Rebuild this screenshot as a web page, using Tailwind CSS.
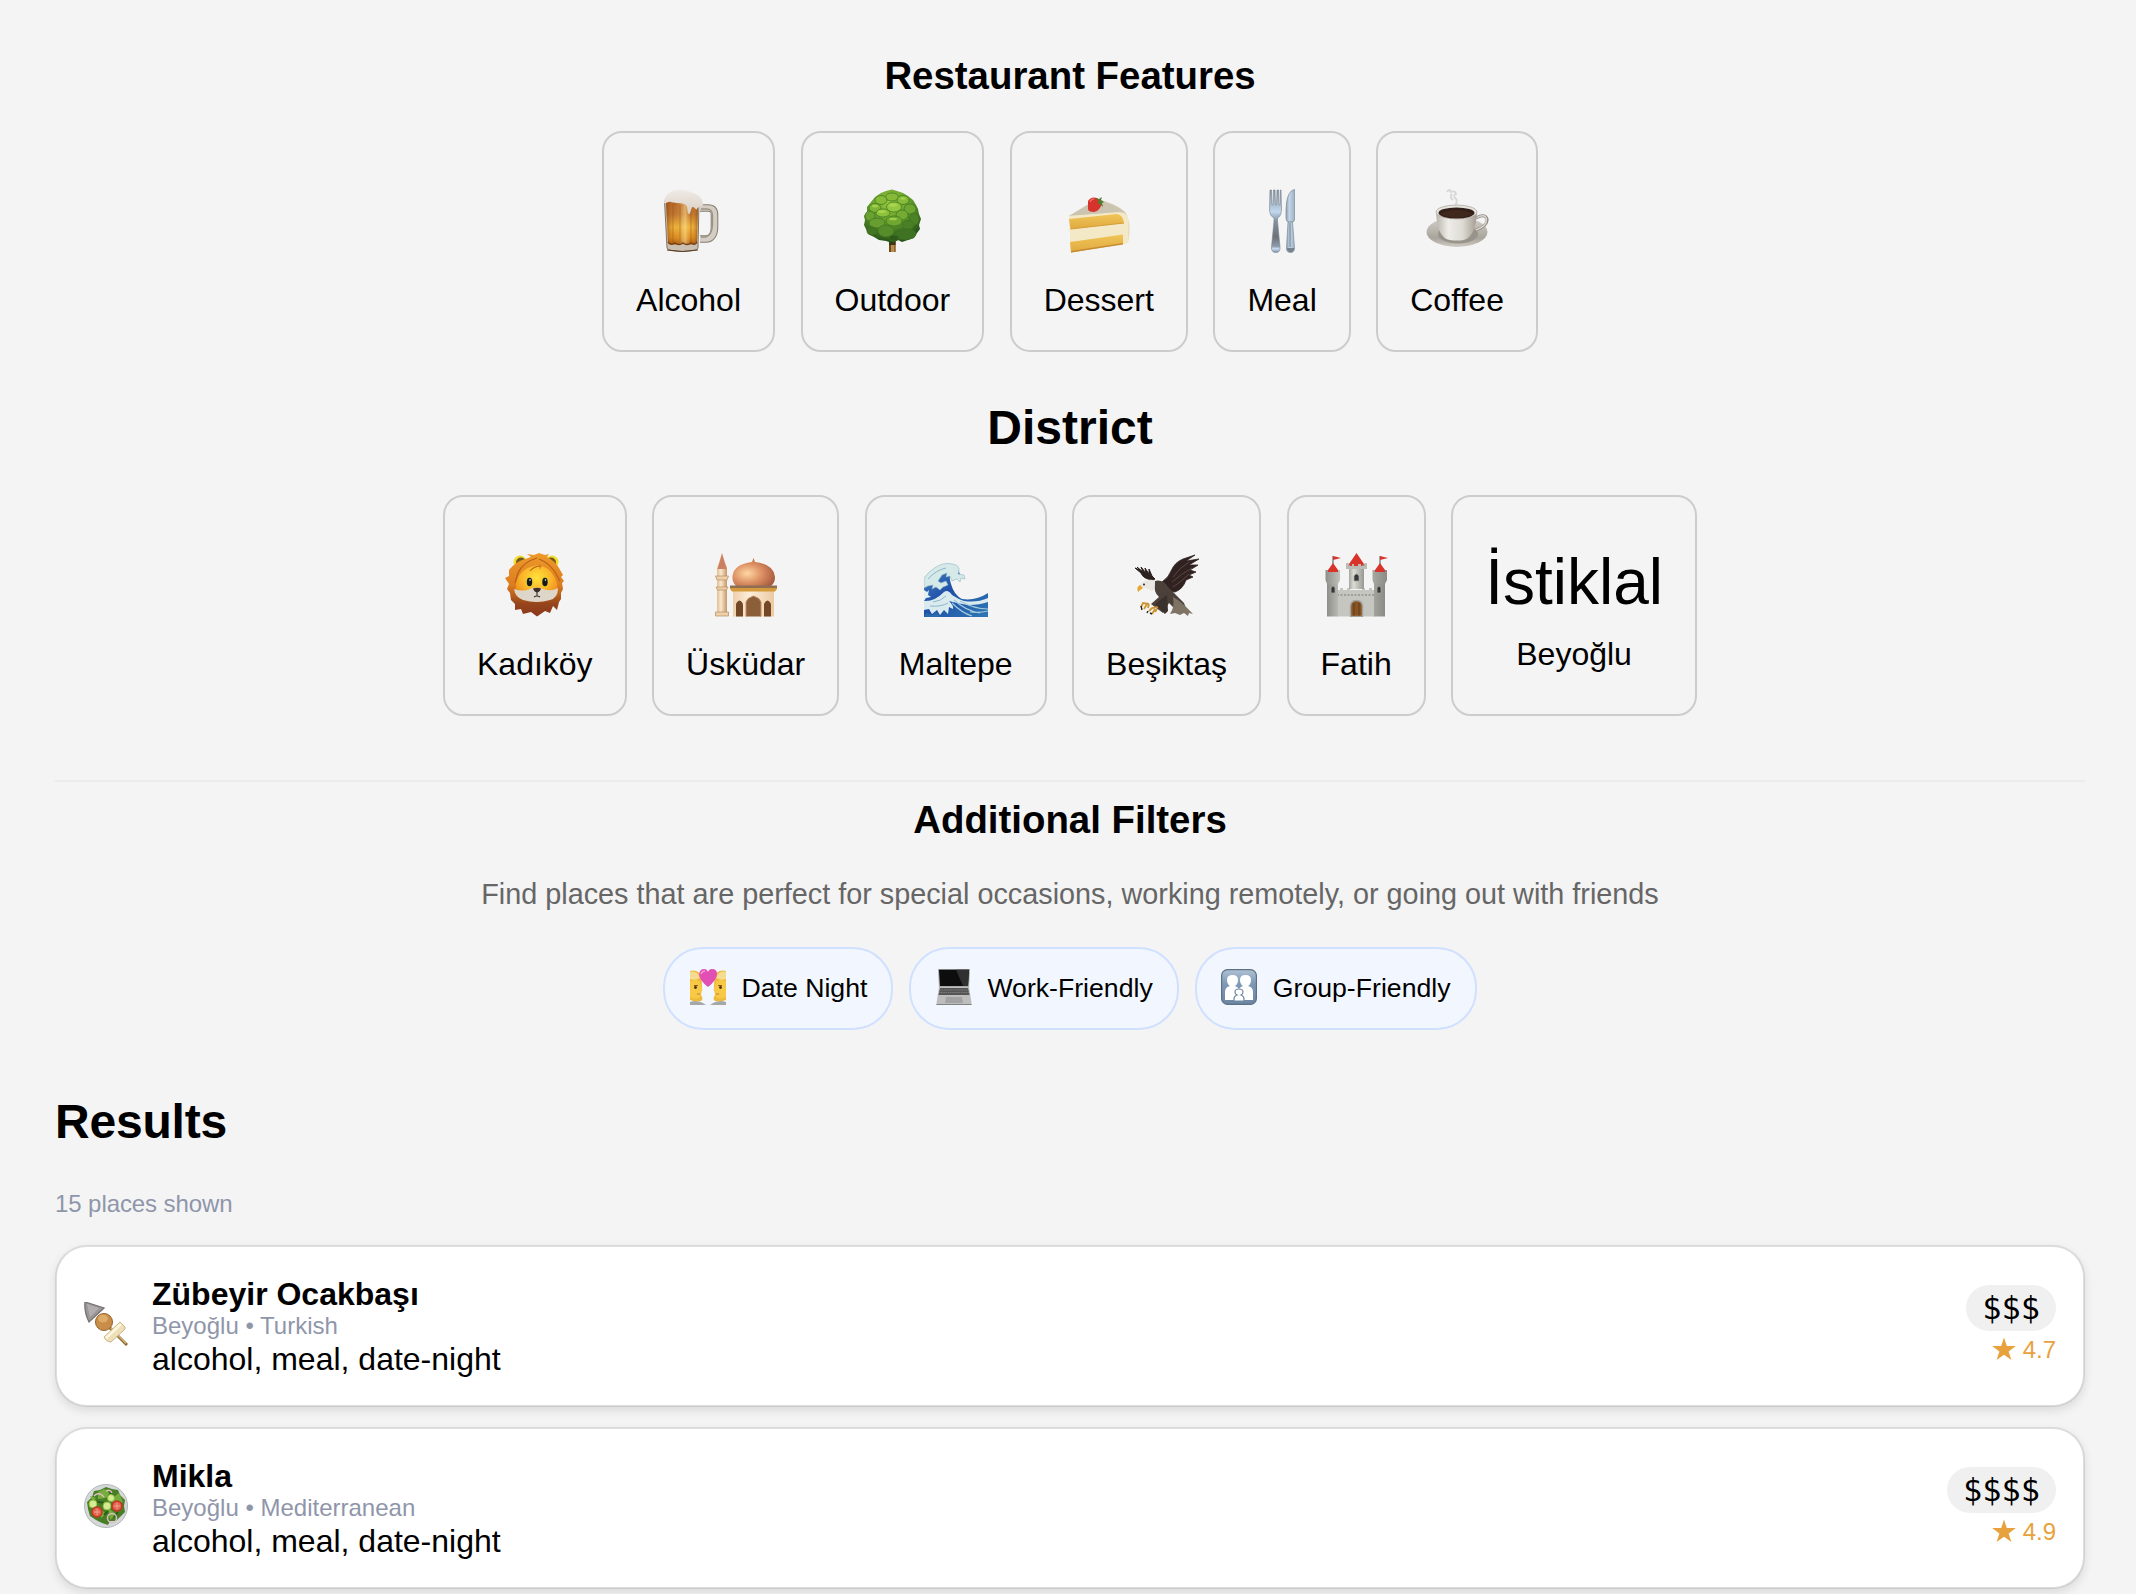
<!DOCTYPE html>
<html lang="en">
<head>
<meta charset="utf-8">
<title>Restaurant Finder</title>
<script src="https://cdn.jsdelivr.net/npm/@tailwindcss/browser@4"></script>
</head>
<body class="bg-[#f4f4f4] text-black font-['Liberation_Sans',Arial,sans-serif] overflow-hidden h-[1594px]">
<main class="pl-[55px] pr-[51px] pt-[54px]">

<!-- Features -->
<section>
<h3 class="text-center font-bold text-[38.4px] leading-[44px]">Restaurant Features</h3>
<div class="mt-[33px] flex justify-center gap-[25.5px]">
  <button class="h-[221px] rounded-[20px] border-2 border-[#ccc] px-8 pt-14 flex flex-col items-center">
    <svg class="size-16 shrink-0" viewBox="0 0 64 64">
      <defs>
        <linearGradient id="beer" x1="0" y1="0" x2="0" y2="1"><stop offset="0" stop-color="#b4652a"/><stop offset=".3" stop-color="#bf7430"/><stop offset=".6" stop-color="#eeb53a"/><stop offset=".85" stop-color="#d98a1e"/><stop offset="1" stop-color="#a8591a"/></linearGradient>
        <linearGradient id="beerx" x1="0" x2="1"><stop offset="0" stop-color="#8a4310" stop-opacity=".7"/><stop offset=".25" stop-color="#c97a22" stop-opacity="0"/><stop offset=".6" stop-color="#ffe9a0" stop-opacity=".55"/><stop offset=".8" stop-color="#e09a30" stop-opacity="0"/><stop offset="1" stop-color="#8a4310" stop-opacity=".7"/></linearGradient>
        <linearGradient id="foam" x1="0" y1="0" x2="0" y2="1"><stop offset="0" stop-color="#efebe6"/><stop offset="1" stop-color="#d9cfc4"/></linearGradient>
      </defs>
      <path d="M43 19H51C56 19 57.500 22 57.500 26V38C57.500 46 54 50 49 50H43" fill="none" stroke="#857a6d" stroke-width="7.600"/>
      <path d="M43 19H51C56 19 57.500 22 57.500 26V38C57.500 46 54 50 49 50H43" fill="none" stroke="#d3cdc4" stroke-width="5.600"/>
      <path d="M44 20H50Q55 20 55.500 26V36Q55 46 49 48H44" fill="none" stroke="#9c9184" stroke-width="1.300"/>
      <path d="M7.500 12L10 59Q10 62 25 62.500Q41 62 41 59L42 12Z" fill="#c9bfb2" stroke="#6d5b48" stroke-width=".8"/>
      <path d="M9 12L11 54Q18 57 25 54Q33 57 40 54L41 12Z" fill="url(#beer)"/>
      <path d="M9 12L11 54Q18 57 25 54Q33 57 40 54L41 12Z" fill="url(#beerx)"/>
      <path d="M16 14V54M23 16V54M34 20V54" stroke="#8f4c14" stroke-opacity=".5" stroke-width=".9"/>
      <path d="M11 53Q14 57 18 54Q22 57 26 54Q30 57 34 54Q38 57 40 53" fill="none" stroke="#7a3f10" stroke-width="1.400"/>
      <path d="M10 61Q25 64 41 61" fill="none" stroke="#5a3a20" stroke-width="1"/>
      <path d="M7 14C7 8 11 2 20 1C28-.500 33 3 37 4C43 7 46 10 46 16C45 19 41 17 40 20C39 22 38 18 36 18C34 17 34 25 32 25C30 25 31 18 29 16C24 13 18 15 14 13C11 12 9 15 7 14Z" fill="url(#foam)"/>
    </svg>
    <span class="mt-[29px] text-[32px] leading-9">Alcohol</span>
  </button>
  <button class="h-[221px] rounded-[20px] border-2 border-[#ccc] px-8 pt-14 flex flex-col items-center">
    <svg class="size-16 shrink-0" viewBox="0 0 64 64">
      <defs><radialGradient id="tree" cx=".45" cy=".25" r=".75"><stop offset="0" stop-color="#9ac83c"/><stop offset=".5" stop-color="#5f9a2c"/><stop offset="1" stop-color="#254f17"/></radialGradient></defs>
      <path d="M29 50H35.500V63H29Z" fill="#b98d4a"/><path d="M29 50H31V63H29ZM34.500 50H35.500V63H34.500Z" fill="#6d4a1e"/><path d="M29 51H35.500V56H29Z" fill="#3c3518"/>
      <path d="M32 .500L37 2L43 4L48 7L53 11L56 16L58 20L59 25L61 30L59 36L60 40L57 44L54 49L48 51L42 53L38 51L32 54L26 52L19 51L14 48L8 45L6 40L4 36L5 31L4 27L7 23L7 18L11 13L15 8L21 4L26 2Z" fill="url(#tree)"/>
      <g fill="#86ba38" stroke="#3f7320" stroke-width=".7">
        <ellipse cx="32" cy="8" rx="6.500" ry="4"/><ellipse cx="21" cy="11" rx="6" ry="4.500"/><ellipse cx="43" cy="11" rx="6" ry="4.500"/><ellipse cx="15" cy="19" rx="6" ry="4.500" fill="#7db435"/><ellipse cx="34" cy="18" rx="7.500" ry="5" fill="#94c740"/><ellipse cx="50" cy="20" rx="6" ry="5" fill="#6fa631"/>
        <ellipse cx="23" cy="24" rx="7" ry="4" fill="#8cc23b"/><ellipse cx="10" cy="27" rx="5" ry="5" fill="#6aa02f"/><ellipse cx="42" cy="26" rx="6" ry="5" fill="#75ab33"/><ellipse cx="54" cy="30" rx="5" ry="6" fill="#4c8226"/>
        <ellipse cx="17" cy="34" rx="8" ry="5" fill="#679e2f"/><ellipse cx="34" cy="32" rx="8" ry="5" fill="#6fa731"/><ellipse cx="48" cy="36" rx="6" ry="4.500" fill="#4a7f26"/>
        <ellipse cx="26" cy="42" rx="8" ry="6" fill="#568c2a"/><ellipse cx="12" cy="42" rx="5" ry="4" fill="#437622"/><ellipse cx="45" cy="45" rx="11" ry="5.500" fill="#3f7222"/><ellipse cx="34" cy="49" rx="5" ry="3" fill="#2e5a1a"/>
      </g>
      <g fill="#b2dc55" opacity=".7"><ellipse cx="33" cy="16" rx="4" ry="1.800"/><ellipse cx="22" cy="22.500" rx="4" ry="1.500"/><ellipse cx="15" cy="17" rx="3" ry="1.500"/><ellipse cx="33" cy="30" rx="4" ry="1.300"/><ellipse cx="43" cy="9.500" rx="3" ry="1.300"/></g>
    </svg>
    <span class="mt-[29px] text-[32px] leading-9">Outdoor</span>
  </button>
  <button class="h-[221px] rounded-[20px] border-2 border-[#ccc] px-8 pt-14 flex flex-col items-center">
    <svg class="size-16 shrink-0" viewBox="0 0 64 64">
      <defs><linearGradient id="sponge" x1="0" y1="0" x2="0" y2="1"><stop offset="0" stop-color="#f0c558"/><stop offset="1" stop-color="#e0a93f"/></linearGradient></defs>
      <path d="M2 27L30 10Q55 16 60 26Q65 37 61 54L4 63.500Z" fill="#e9dfc0"/>
      <path d="M2 27L30 10Q54 17 60 26Q58 23 52 24Z" fill="#cbc4b0"/>
      <path d="M2 27L52 23Q61 23 61 33V54L4 63.500Z" fill="#f4e9c6"/>
      <path d="M2 30L50 25Q56 26 57 34L3.500 40Z" fill="url(#sponge)"/>
      <path d="M3 53L56 45.500V55L4 63.500Z" fill="url(#sponge)"/>
      <path d="M4 62L56 54V55.500L4 63.500Z" fill="#c58b30"/>
      <path d="M3.500 40L57 34" stroke="#d59b36" stroke-width="1"/>
      <path d="M21 12Q24 7 30 9Q36 12 34 17Q32 22 27 23Q21 23 21 20Z" fill="#d8322c"/>
      <path d="M23 13Q24 10 27 10" stroke="#ef6c5c" stroke-width="1.500" fill="none"/>
      <path d="M28 9L32 10L35 8L34 11L37 13L35 14L36 18L33 15L30 14L32 12Z" fill="#4f7c2e"/>
    </svg>
    <span class="mt-[29px] text-[32px] leading-9">Dessert</span>
  </button>
  <button class="h-[221px] rounded-[20px] border-2 border-[#ccc] px-8 pt-14 flex flex-col items-center">
    <svg class="size-16 shrink-0" viewBox="0 0 64 64">
      <defs>
        <linearGradient id="steel" x1="0" y1="0" x2="0" y2="1"><stop offset="0" stop-color="#8793a0"/><stop offset=".35" stop-color="#c1d8ee"/><stop offset=".5" stop-color="#8391a0"/><stop offset=".75" stop-color="#6d7278"/><stop offset=".9" stop-color="#8e9aa8"/><stop offset=".94" stop-color="#c7dcf4"/><stop offset="1" stop-color="#7f8e9d"/></linearGradient>
        <linearGradient id="blade" x1="0" x2="1"><stop offset="0" stop-color="#8c9cab"/><stop offset=".4" stop-color="#c3d6e8"/><stop offset="1" stop-color="#9fb2c4"/></linearGradient>
      </defs>
      <path d="M20 1H21.500L22 16H23L23.500 1H25L25.500 16H26.500L27 1H28.500L29 16H30L30.300 1H31L31.500 20Q31.500 27 27.500 29V32L30 58Q30.500 63.500 26 63.500Q21 63.500 21.500 58L24 32V29Q19.500 27 19.500 20Z" fill="url(#steel)" stroke="#77838f" stroke-width=".6"/>
      <path d="M44.500 .500V31Q44 33 42.500 33H38Q36 32 36 29Q35.500 11 39 5Q41 1 44.500 .500Z" fill="url(#blade)" stroke="#7d8c9a" stroke-width=".7"/>
      <path d="M38 33H42.500L44.500 59Q44.500 63.500 40.500 63.500Q36.500 63.500 36.500 59Z" fill="url(#blade)" stroke="#7d8c9a" stroke-width=".7"/>
      <path d="M40 34V58" stroke="#71808e" stroke-width="1"/><path d="M37 59H44.300Q44 63 40.500 63.300Q37 63 37 59Z" fill="#75828e"/>
    </svg>
    <span class="mt-[29px] text-[32px] leading-9">Meal</span>
  </button>
  <button class="h-[221px] rounded-[20px] border-2 border-[#ccc] px-8 pt-14 flex flex-col items-center">
    <svg class="size-16 shrink-0" viewBox="0 0 64 64">
      <defs>
        <linearGradient id="cup" x1="0" x2="1"><stop offset="0" stop-color="#b9b5ad"/><stop offset=".3" stop-color="#efede8"/><stop offset=".65" stop-color="#dedbd4"/><stop offset="1" stop-color="#a19c93"/></linearGradient>
        <linearGradient id="saucer" x1="0" y1="0" x2="0" y2="1"><stop offset="0" stop-color="#d6d2cb"/><stop offset=".7" stop-color="#a8a39b"/><stop offset="1" stop-color="#d0ccc4"/></linearGradient>
      </defs>
      <path d="M22 3Q25-1 26 3Q30 1 31 5Q28 6 30 9Q33 11 31 15V22M27 5Q24 8 28 11" fill="none" stroke="#c9c9c9" stroke-width="1.800" opacity=".7"/>
      <ellipse cx="32" cy="43" rx="30.500" ry="15" fill="url(#saucer)"/>
      <ellipse cx="33" cy="45" rx="20" ry="9.500" fill="#98938b"/>
      <path d="M51 29Q60 24 62 30Q63 37 51 41" fill="none" stroke="#908b82" stroke-width="3"/>
      <path d="M51 29Q60 24 61.500 30Q62 37 51 41" fill="none" stroke="#dad7d0" stroke-width="1.400"/>
      <path d="M11 23Q12 49 25 51Q32 52 39 51Q51 47 52 23Z" fill="url(#cup)"/>
      <ellipse cx="31.500" cy="23" rx="20.500" ry="7" fill="#e6e3dd" stroke="#a9a49b" stroke-width=".7"/>
      <ellipse cx="31.500" cy="24" rx="18" ry="5.500" fill="#33201a"/>
      <path d="M15 25Q31 17 48 25Q31 32 15 25Z" fill="#4b2e20" opacity=".6"/>
    </svg>
    <span class="mt-[29px] text-[32px] leading-9">Coffee</span>
  </button>
</div>
</section>

<!-- Districts -->
<section class="mt-12">
<h2 class="text-center font-bold text-[48px] leading-14">District</h2>
<div class="mt-[39px] flex justify-center gap-[25.5px]">
  <button class="h-[221px] rounded-[20px] border-2 border-[#ccc] px-8 pt-14 flex flex-col items-center">
    <svg class="size-16 shrink-0" viewBox="0 0 64 64">
      <defs>
        <linearGradient id="mane" x1="0" y1="0" x2="0" y2="1"><stop offset="0" stop-color="#ee9a2a"/><stop offset=".5" stop-color="#dd7d1f"/><stop offset=".8" stop-color="#96451c"/><stop offset="1" stop-color="#8a371c"/></linearGradient>
        <radialGradient id="face" cx=".5" cy=".35" r=".6"><stop offset="0" stop-color="#ffe23a"/><stop offset=".6" stop-color="#fbb42a"/><stop offset="1" stop-color="#ec8b1e"/></radialGradient>
      </defs>
      <circle cx="17" cy="9" r="6.500" fill="#f3dc2a"/><circle cx="49" cy="9" r="6.500" fill="#f3dc2a"/><circle cx="18" cy="9.500" r="5" fill="#6f5a1e"/><circle cx="48" cy="9.500" r="5" fill="#6f5a1e"/>
      <path d="M24 1L31 2L36 0L42 2L46 1L44 4Q52 8 56 15L60 22L58 24L61 28L59 30L60 36L58 40L58 46L56 49L54 57L50 53L47 60L42 58L34 63.500L28 59L20 61L18 56L12 57L12 51L8 47L7 40L4 36L6 31L2 25L6 23L6 17Q12 9 22 6L28 4Z" fill="url(#mane)"/>
      <path d="M36 12Q17 14 13 30Q11 42 20 46Q33 51 46 46Q56 42 54 30Q50 17 39 13L37 17Z" fill="url(#face)"/>
      <path d="M11 36Q20 39 27 36Q33 33 40 36Q48 39 55 35Q55 45 47 47Q34 51 20 47Q12 44 11 36Z" fill="#ddd6c9"/>
      <ellipse cx="26.500" cy="29" rx="3.800" ry="5.500" fill="#e9cf22"/><ellipse cx="42" cy="29" rx="3.800" ry="5.500" fill="#e9cf22"/>
      <ellipse cx="26.500" cy="29" rx="2.700" ry="4.300" fill="#16181e"/><ellipse cx="42" cy="29" rx="2.700" ry="4.300" fill="#16181e"/><circle cx="27" cy="27" r=".8" fill="#fff"/><circle cx="42.500" cy="27" r=".8" fill="#fff"/>
      <path d="M30 35.500Q34 34 38 35.500Q37 39 34 39.500Q31 39 30 35.500Z" fill="#3a2c26"/><path d="M34 39V43M31 44Q34 42 37 44" stroke="#3a2c26" stroke-width="1.100" fill="none"/>
      <path d="M34 5Q20 9 15 20L12 30M36 6Q46 10 52 19L57 28M38 13Q31 13 27 18" stroke="#b5611a" stroke-width="1.200" fill="none"/>
    </svg>
    <span class="mt-[29px] text-[32px] leading-9">Kadıköy</span>
  </button>
  <button class="h-[221px] rounded-[20px] border-2 border-[#ccc] px-8 pt-14 flex flex-col items-center">
    <svg class="size-16 shrink-0" viewBox="0 0 64 64">
      <defs>
        <radialGradient id="dome" cx=".35" cy=".55" r=".7"><stop offset="0" stop-color="#ffd7a4"/><stop offset=".5" stop-color="#dc8f62"/><stop offset="1" stop-color="#a4573b"/></radialGradient>
        <linearGradient id="minaret" x1="0" x2="1"><stop offset="0" stop-color="#e0bf98"/><stop offset=".4" stop-color="#fbe7cb"/><stop offset="1" stop-color="#c4976a"/></linearGradient>
        <linearGradient id="wall" x1="0" x2="1"><stop offset="0" stop-color="#efcfab"/><stop offset=".4" stop-color="#fdeeda"/><stop offset="1" stop-color="#eccaa2"/></linearGradient>
      </defs>
      <path d="M8 1L13 15V63H3V15Z" fill="url(#minaret)"/><path d="M8 0L12.500 16H3.500Z" fill="#cb8062"/>
      <path d="M1.500 23H14.500L13 27H3ZM2 34H14L12.500 37H3.500ZM1.500 59H14.500V63H1.500Z" fill="#edcfa9" stroke="#b98c60" stroke-width=".7"/>
      <path d="M39.500 5L41 9Q60 11 61 24Q61 30 57 33H22Q18 29 18.500 23Q20 11 38 9Z" fill="url(#dome)"/>
      <path d="M19 37H60V63.500H19Z" fill="url(#wall)"/>
      <path d="M16 33H63V36L61 38.500H18L16 36Z" fill="#d59a3a"/><path d="M16 32.500H63V35H16Z" fill="#8f6e55"/>
      <path d="M32 63.500V49Q33 45 39.500 43Q46 45 47 49V63.500Z" fill="#8b5f3a"/><path d="M22 63.500V52Q22 49 25.500 47.500Q29 49 29 52V63.500ZM50 63.500V52Q50 49 53.500 47.500Q57 49 57 52V63.500Z" fill="#724827"/>
      <path d="M32 63.500V49Q33 45 39.500 43Q46 45 47 49V63.500" fill="none" stroke="#be8d62" stroke-width="1"/>
    </svg>
    <span class="mt-[29px] text-[32px] leading-9">Üsküdar</span>
  </button>
  <button class="h-[221px] rounded-[20px] border-2 border-[#ccc] px-8 pt-14 flex flex-col items-center">
    <svg class="size-16 shrink-0" viewBox="0 0 64 64">
      <defs><linearGradient id="sea" x1="0" y1="0" x2="1" y2="1"><stop offset="0" stop-color="#4a86c4"/><stop offset=".45" stop-color="#1f50a8"/><stop offset="1" stop-color="#2f77b5"/></linearGradient></defs>
      <path d="M0 26Q6 18 16 13Q28 9 34 15L36 22L28 20Q24 23 27 31Q30 42 38 46Q52 48 64 40V64H0Z" fill="url(#sea)"/>
      <path d="M0 25Q5 18 12 14Q20 9 28 11Q36 12 35 18L34 21L40 22L41 26L37 25L36 29L33 26L28 28L26 23L22 24L23 20L18 22L14 28L17 30L22 28L24 32L19 34L16 37L12 34L8 36L9 32L4 33L0 35Z" fill="#d5e9e9" stroke="#8fb5c5" stroke-width=".6"/>
      <path d="M0 48Q10 49 20 39Q24 36 28 42Q34 46 40 48Q53 50 64 45V49Q56 52 44 52Q32 50 25 48Q30 53 29 56L25 54L24 61L20 57L16 62L13 57L8 61L5 56L0 57Z" fill="#d9ebef"/>
      <path d="M30 47Q42 58 56 60M28 50Q38 60 48 63M36 48Q50 56 64 56M46 59Q56 60 64 58" stroke="#a3cbdd" stroke-width="1.200" fill="none"/>
      <path d="M0 37L3 39L5 37L4 42L7 44L2 45L0 48Z" fill="#e4f1f3"/>
      <path d="M2 60L8 62L12 60L18 64H0Z" fill="#2b69ad"/>
      <path d="M4 26Q12 17 22 15M9 49Q17 48 22 43M6 53Q17 54 24 50" stroke="#8eb7c8" stroke-width="1" fill="none"/>
    </svg>
    <span class="mt-[29px] text-[32px] leading-9">Maltepe</span>
  </button>
  <button class="h-[221px] rounded-[20px] border-2 border-[#ccc] px-8 pt-14 flex flex-col items-center">
    <svg class="size-16 shrink-0" viewBox="0 0 64 64">
      <path d="M18 27Q8 26 6 20L0 15L5 17L2 14L8 19L6 14L11 20L10 15L14 21L14 16L17 23L20 26Z" fill="#2b211f" stroke="#2b211f" stroke-width="1"/>
      <path d="M27 29Q34 24 36 18Q40 9 48 6L60 2L51 8L64 6L54 12L63 12L55 17L61 19L54 22L58 24L51 27Q48 36 40 39Q34 38 31 37Z" fill="#2f2220" stroke="#2f2220" stroke-width=".8"/>
      <path d="M38 24Q44 15 54 9M37 29Q46 21 57 15M38 34Q46 29 54 21" stroke="#5c4742" stroke-width="1" fill="none"/>
      <path d="M20 28Q28 26 33 34L41 42L49 50L52 58L40 56L34 50L28 60L16 51L24 44Q18 39 20 28Z" fill="#4b403a"/>
      <path d="M38 44Q46 48 58 61L54 60L53 63L49 60L45 62L40 60L35 61Q40 54 38 44Z" fill="#7f7365"/>
      <path d="M7 30Q11 26 18 27L20 30Q20 36 17 38Q10 34 5 34Q4 31 7 30Z" fill="#eae7e2"/><path d="M5 32Q1 34 3 39Q5 37 8 35Z" fill="#e7a630"/><circle cx="9" cy="31.500" r="1" fill="#302520"/>
      <path d="M14 51L8 50L6 54M12 51L9 56M14 51L13 55M23 54L17 55L14 58M20 56L17 61M22 56L20 59" stroke="#cf9431" stroke-width="1.800" fill="none"/><path d="M6 53L7 57M17 61L15 60M13 58L12 60" stroke="#2b211f" stroke-width="1.400"/>
      <path d="M20 51L32 42L33 58L30 61Z" fill="#3a302c"/>
    </svg>
    <span class="mt-[29px] text-[32px] leading-9">Beşiktaş</span>
  </button>
  <button class="h-[221px] rounded-[20px] border-2 border-[#ccc] px-8 pt-14 flex flex-col items-center">
    <svg class="size-16 shrink-0" viewBox="0 0 64 64">
      <defs><linearGradient id="stone" x1="0" x2="1"><stop offset="0" stop-color="#8f8f8a"/><stop offset=".35" stop-color="#dcdcd6"/><stop offset="1" stop-color="#8b8b86"/></linearGradient></defs>
      <path d="M13 37H16V35H19V37H23V35H26V37H38V35H41V37H45V35H48V37H51V63.500H13Z" fill="#c6c6c0"/><path d="M13 42H51" stroke="#92928c" stroke-width="1.500" stroke-dasharray="2 1.500"/>
      <path d="M23 16V11H42V16H40V36H25V16Z" fill="url(#stone)"/>
      <path d="M32.500 0L40 11L38 13H36V11H34V13H30V11H28V13H26L25 11Z" fill="#d8342c"/>
      <path d="M22 10H24.500V13H28V11H30V13H35V11H37V13H40.500V10H43V16H22Z" fill="#bcbcb6"/>
      <path d="M3 28H14V63.500H3ZM50 28H61V63.500H50Z" fill="url(#stone)"/><path d="M1.500 17H4V19H7V17H10V19H13V17H16V27L14 31H3L1.500 27ZM48.500 17H51V19H54V17H57V19H60V17H63V27L61 31H50L48.500 27Z" fill="url(#stone)"/>
      <path d="M9 10L14 17V19H4V17ZM56 10L61 17V19H51V17Z" fill="#d8342c"/>
      <path d="M9 11V3M56 11V3" stroke="#555" stroke-width="1"/><path d="M9 3L17 5L13 6L9 7ZM56 3L64 5L60 6L56 7Z" fill="#d8342c"/>
      <path d="M30 28V23Q32.500 19 35 23V28ZM7 40V35Q9 31 11 35V40ZM53 40V35Q55 31 57 35V40Z" fill="#38383a" stroke="#a4a49e" stroke-width=".8"/>
      <path d="M26.500 63.500V53Q27 47.500 32.500 47.500Q38 47.500 38.500 53V63.500Z" fill="#865425" stroke="#a3a39c" stroke-width="1.500"/><path d="M30 50V63M35 50V63" stroke="#5b3513" stroke-width=".7"/>
    </svg>
    <span class="mt-[29px] text-[32px] leading-9">Fatih</span>
  </button>
  <button class="h-[221px] rounded-[20px] border-2 border-[#ccc] px-8 pt-[53px] flex flex-col items-center">
    <span class="text-[64px] leading-[64px]">İstiklal</span>
    <span class="mt-[22px] text-[32px] leading-9">Beyoğlu</span>
  </button>
</div>
</section>

<!-- Additional filters -->
<section class="mt-16 border-t-2 border-[#ebebeb] pt-4">
<h3 class="text-center font-bold text-[38.4px] leading-[44px]">Additional Filters</h3>
<p class="mt-9 text-center text-[28.8px] leading-8 text-[#666]">Find places that are perfect for special occasions, working remotely, or going out with friends</p>
<div class="mt-[37px] flex justify-center gap-4 text-[26.67px] leading-8">
  <button class="h-[83px] rounded-[40px] border-2 border-[#d0e0ff] bg-[#f2f7ff] px-6 flex items-center">
    <svg class="size-9 ml-px mb-1 shrink-0" viewBox="0 0 36 36">
      <path d="M0 33Q8 30 16 36H0ZM36 33Q28 30 20 36H36Z" fill="#a5a8ab"/>
      <path d="M0 2Q9 0 11 8Q13 16 11 26Q14 30 11 32Q5 33 0 31ZM36 2Q27 0 25 8Q23 16 25 26Q22 30 25 32Q31 33 36 31Z" fill="#edba3d"/>
      <path d="M0 13Q7 8 10 14L12.500 21L11 23L10 28Q5 31 0 28ZM36 13Q29 8 26 14L23.500 21L25 23L26 28Q31 31 36 28Z" fill="#f7c944"/>
      <path d="M0 3Q7 1 10 9Q4 12 0 10ZM36 3Q29 1 26 9Q32 12 36 10Z" fill="#f6dc90"/>
      <path d="M4 16.500H8M28 16.500H32" stroke="#8b5a1e" stroke-width="1"/><circle cx="5.500" cy="18.500" r="1.400" fill="#4a2e16"/><circle cx="30.500" cy="18.500" r="1.400" fill="#4a2e16"/><path d="M7 25H10M26 25H29" stroke="#c77c2c" stroke-width="1.200"/>
      <path d="M18 18Q9 11 9 5Q10 0 14 0Q17 0 18 3Q19 0 22 0Q27 0 27 5Q27 11 18 18Z" fill="#e24fb4"/><path d="M11 5Q12 2 15 2" stroke="#f59ada" stroke-width="1.500" fill="none"/>
    </svg>
    <span class="ml-[15px] mb-0.5">Date Night</span>
  </button>
  <button class="h-[83px] rounded-[40px] border-2 border-[#d0e0ff] bg-[#f2f7ff] px-6 flex items-center">
    <svg class="size-9 ml-px mb-1 shrink-0" viewBox="0 0 36 36">
      <path d="M2 0H34L33 19H3Z" fill="#a9a9a9"/><path d="M3 .800H33L32 17H4Z" fill="#0d0d0d"/><path d="M20 .800H33L32 17H27Z" fill="#303030"/>
      <path d="M3 18H33L35.500 34V36H.500V34Z" fill="#bdbdbd"/><path d="M4 19H32L33.500 26H2.500Z" fill="#555"/><path d="M3.500 21H32.500M3 23.500H33" stroke="#8b8b8b" stroke-width=".7" stroke-dasharray="1.500 .7"/><path d="M10 28H26L27 34H9Z" fill="#a3a3a3"/><path d="M.500 35.500H35.500" stroke="#818181"/>
    </svg>
    <span class="ml-[15px] mb-0.5">Work-Friendly</span>
  </button>
  <button class="h-[83px] rounded-[40px] border-2 border-[#d0e0ff] bg-[#f2f7ff] px-6 flex items-center">
    <svg class="size-9 mb-1 shrink-0" viewBox="0 0 36 36">
      <defs><linearGradient id="sign" x1="0" y1="0" x2="0" y2="1"><stop offset="0" stop-color="#b0c2d4"/><stop offset=".4" stop-color="#7f9ab6"/><stop offset="1" stop-color="#6c86a2"/></linearGradient></defs>
      <rect x=".6" y=".6" width="34.800" height="34.800" rx="6" fill="url(#sign)" stroke="#5d7085" stroke-width="1.200"/>
      <path d="M4 31V23Q4 18 9 17Q6 15 6 11Q6 6 11.500 6Q17 6 17 11Q17 15 14 17Q17 18 18 20Q19 18 22 17Q19 15 19 11Q19 6 24.500 6Q30 6 30 11Q30 15 27 17Q32 18 32 23V31Z" fill="#fff"/>
      <path d="M13 32V30Q13 27 16 26Q14 25 14 23Q14 20 18 20Q22 20 22 23Q22 25 20 26Q23 27 23 30V32Z" fill="#fff" stroke="#7089a4" stroke-width="1.200"/>
    </svg>
    <span class="ml-4 mb-0.5">Group-Friendly</span>
  </button>
</div>
</section>

<!-- Results -->
<section class="mt-16">
<h2 class="font-bold text-[48px] leading-14 -tracking-[0.2px]">Results</h2>
<p class="mt-10 text-2xl leading-7 -tracking-[0.08px] text-[#8f96aa]">15 places shown</p>
<ul class="mt-[27px] flex flex-col gap-5">
  <li class="h-[162px] rounded-[32px] border-2 border-black/9 bg-white bg-clip-padding shadow-[0_4px_10px_rgba(0,0,0,0.1)] pl-[27px] pr-[27px] flex items-start">
    <svg class="mt-[55px] size-11 shrink-0" viewBox="0 0 44 44">
      <path d="M17 17L43 43" stroke="#8d6a35" stroke-width="3"/><path d="M18 17L42 41.500" stroke="#d3b273" stroke-width="1.200"/>
      <path d="M1 0L20 6L5 20Q0 10 1 0Z" fill="#9c9799" stroke="#77716f" stroke-width="1.300"/><path d="M3 2L15 6L6 15" fill="#b2adaf"/>
      <circle cx="20" cy="20" r="8.500" fill="#c98d49" stroke="#936126" stroke-width="1"/><ellipse cx="19" cy="16.500" rx="5" ry="4" fill="#dfab68"/>
      <path d="M36 20L41 25Q42 27 39 29L27 40Q22 40 20 35Z" fill="#eddfb8" stroke="#c0a878" stroke-width=".8"/><path d="M37 22L22 36" stroke="#fff6dd" stroke-width="2.500"/>
    </svg>
    <div class="ml-6 mt-[29px]">
      <div class="font-bold text-[32px] leading-9">Zübeyir Ocakbaşı</div>
      <div class="text-2xl leading-7 text-[#8f96aa]">Beyoğlu • Turkish</div>
      <div class="mt-px text-[32px] leading-9">alcohol, meal, date-night</div>
    </div>
    <div class="ml-auto mt-[38px] flex flex-col items-end">
      <span class="h-[46px] rounded-full bg-[#f0f0f0] px-4 text-[32px] leading-[46px] font-['DejaVu_Sans_Mono',monospace]">$$$</span>
      <span class="mt-[5px] flex items-center gap-[7px] text-2xl leading-7 text-[#e8a23d]">
        <svg class="size-6 mb-0.5" viewBox="0 0 24 24" fill="currentColor"><path d="M12 .500L14.800 9.100H23.900L16.600 14.400L19.400 23L12 17.700L4.600 23L7.400 14.400L.100 9.100H9.200Z"/></svg>4.7</span>
    </div>
  </li>
  <li class="h-[162px] rounded-[32px] border-2 border-black/9 bg-white bg-clip-padding shadow-[0_4px_10px_rgba(0,0,0,0.1)] pl-[27px] pr-[27px] flex items-start">
    <svg class="mt-[55px] size-11 shrink-0" viewBox="0 0 44 44">
      <circle cx="22" cy="22" r="21.500" fill="#d5d8da" stroke="#b3b6b6" stroke-width="1"/>
      <path d="M22 3L28 5L34 6L36 11L41 16L40 22L41 28L36 33L32 37L26 37L24 41L18 39L12 36L6 32L4 25L3 18L8 13L10 7L16 6Z" fill="#487f26"/>
      <path d="M14 8L20 5L26 8L22 14L14 15ZM27 15L35 9L39 18L31 22ZM14 22L22 30L17 34ZM24 24L32 30L26 36ZM6 12L12 14L9 18Z" fill="#75ae3b"/>
      <path d="M10 17L20 19M25 7L30 13M20 31L24 27M34 28L30 33" stroke="#2d5d18" stroke-width="2"/>
      <g fill="#d4eb91" stroke="#8cba45" stroke-width="1"><circle cx="9" cy="20" r="4"/><circle cx="27" cy="14" r="3.500"/><circle cx="23" cy="22" r="4"/></g>
      <g fill="#e06450" stroke="#c33524" stroke-width="1.500"><circle cx="13" cy="28" r="5"/><circle cx="33" cy="22" r="5"/></g><path d="M10 28H16M13 25V31M30 22H36M33 19V25" stroke="#f1a38e" stroke-width="1"/>
      <g fill="none" stroke="#dfbcc3" stroke-width="1.500"><path d="M10 12Q15 7 20 13"/><circle cx="28" cy="34" r="4.500"/><path d="M22 7Q26 5 28 9"/></g>
    </svg>
    <div class="ml-6 mt-[29px]">
      <div class="font-bold text-[32px] leading-9">Mikla</div>
      <div class="text-2xl leading-7 text-[#8f96aa]">Beyoğlu • Mediterranean</div>
      <div class="mt-px text-[32px] leading-9">alcohol, meal, date-night</div>
    </div>
    <div class="ml-auto mt-[38px] flex flex-col items-end">
      <span class="h-[46px] rounded-full bg-[#f0f0f0] px-4 text-[32px] leading-[46px] font-['DejaVu_Sans_Mono',monospace]">$$$$</span>
      <span class="mt-[5px] flex items-center gap-[7px] text-2xl leading-7 text-[#e8a23d]">
        <svg class="size-6 mb-0.5" viewBox="0 0 24 24" fill="currentColor"><path d="M12 .500L14.800 9.100H23.900L16.600 14.400L19.400 23L12 17.700L4.600 23L7.400 14.400L.100 9.100H9.200Z"/></svg>4.9</span>
    </div>
  </li>
</ul>
</section>
</main>
</body>
</html>
